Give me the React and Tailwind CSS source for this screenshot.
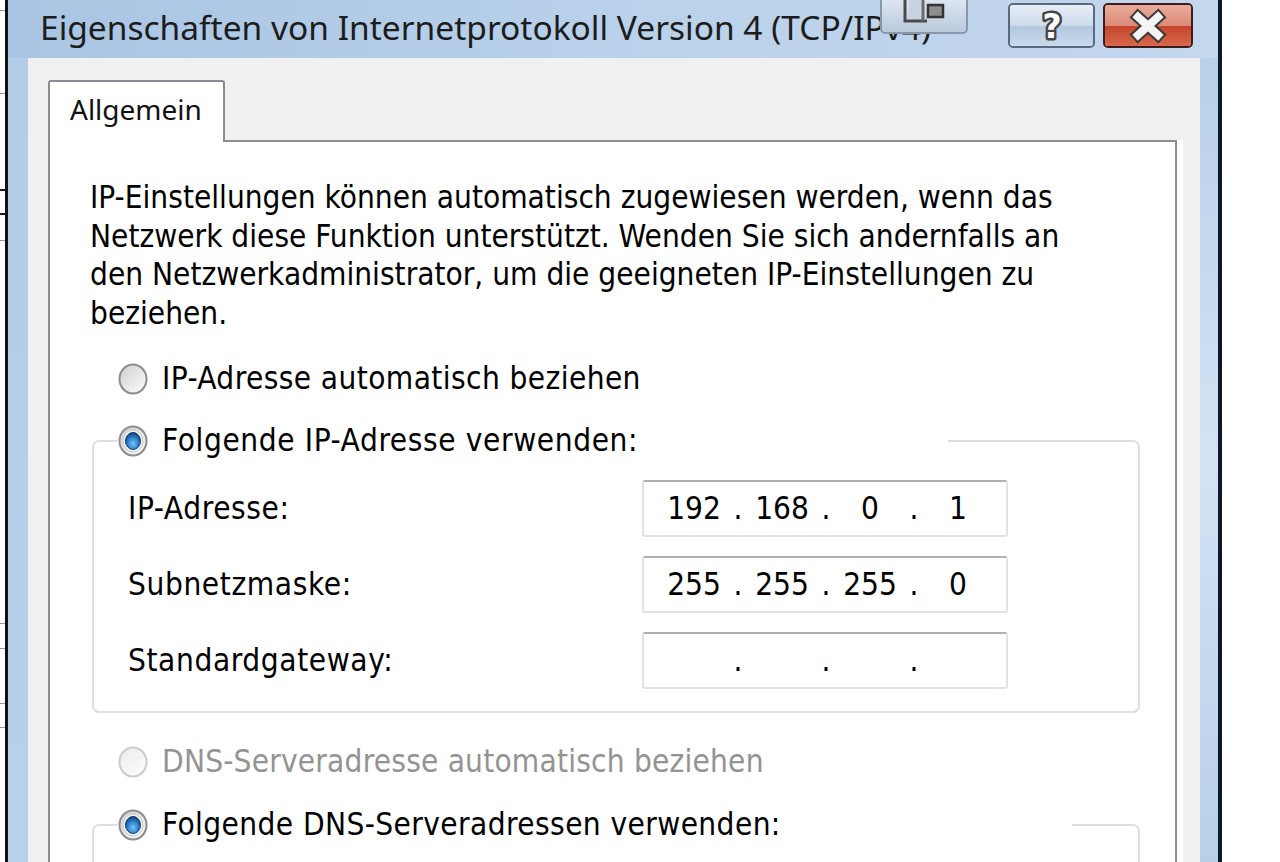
import React from "react";

const dlgFont = "font-['DejaVu_Sans_Condensed','DejaVu_Sans',sans-serif] [font-stretch:condensed]";
const uiFont = "font-['Noto_Sans','Open_Sans',sans-serif]";

function Radio({ checked = false, disabled = false }) {
  const v = disabled ? "d" : checked ? "c" : "u";
  return (
    <svg width="30" height="32" viewBox="0 0 30 32" className="shrink-0">
      <defs>
        <linearGradient id={`fill-${v}`} x1="0" y1="0" x2="1" y2="1">
          <stop offset="0" stopColor={disabled ? "#ececec" : "#cfcfcf"} />
          <stop offset="1" stopColor="#fdfdfd" />
        </linearGradient>
        <radialGradient id={`dot-${v}`} cx="0.5" cy="0.65" r="0.6">
          <stop offset="0" stopColor="#7cc4f6" />
          <stop offset="0.55" stopColor="#2f86cf" />
          <stop offset="1" stopColor="#104a86" />
        </radialGradient>
      </defs>
      <ellipse
        cx="15"
        cy="16"
        rx="13.5"
        ry="14.5"
        fill={`url(#fill-${v})`}
        stroke={disabled ? "#cbcbcb" : "#8c8c8c"}
        strokeWidth="2"
      />
      {checked && (
        <>
          <ellipse cx="15" cy="16" rx="10" ry="11" fill="#f4f4f4" stroke="#c6c6c6" strokeWidth="1" />
          <ellipse cx="15" cy="16" rx="7.5" ry="8.5" fill={`url(#dot-${v})`} stroke="#0e3f73" strokeWidth="1" />
        </>
      )}
    </svg>
  );
}

function IpBox({ parts }) {
  return (
    <div className="w-[366px] h-[57px] shrink-0 bg-white border-2 border-[#dfe3e9] border-t-[#aeb0b6] rounded-[3px] flex items-center pl-[12px]">
      {parts.map((p, i) => (
        <React.Fragment key={i}>
          <span className="w-[76px] text-center">{p}</span>
          {i < 3 && <span className="w-[12px] text-center">.</span>}
        </React.Fragment>
      ))}
    </div>
  );
}

function Row({ label, parts }) {
  return (
    <div className="flex items-center h-[57px]">
      <span className="flex-1 tracking-[0.6px]">{label}</span>
      <IpBox parts={parts} />
    </div>
  );
}

export default function App() {
  return (
    <div className="w-[1280px] h-[862px] overflow-hidden bg-white flex text-black">
      {/* background window edge */}
      <div className="w-[5px] h-full bg-white flex flex-col">
        <div className="h-[10px]" />
        <div className="h-[1px] bg-[#9a9a9a]" />
        <div className="h-[82px]" />
        <div className="h-[1px] bg-[#9a9a9a]" />
        <div className="h-[95px]" />
        <div className="h-[2px] bg-[#1a1a1a]" />
        <div className="h-[22px]" />
        <div className="h-[2px] bg-[#1a1a1a]" />
        <div className="h-[25px]" />
        <div className="h-[1px] bg-[#9a9a9a]" />
        <div className="h-[382px]" />
        <div className="h-[1px] bg-[#9a9a9a]" />
        <div className="h-[24px]" />
        <div className="h-[1px] bg-[#9a9a9a]" />
        <div className="h-[54px]" />
        <div className="h-[1px] bg-[#9a9a9a]" />
        <div className="h-[23px]" />
        <div className="h-[1px] bg-[#9a9a9a]" />
      </div>
      <div className="w-[3px] h-full bg-[#111111]" />

      {/* dialog window */}
      <div className="w-[1210px] h-full flex flex-col bg-[#b8d0ea] relative">
        {/* title bar */}
        <div className="h-[58px] shrink-0 bg-gradient-to-r from-[#a9c5e3] via-[#b9d1ea] to-[#c3d7ed] flex items-center pl-[32px] pb-[2px]">
          <span className={`${uiFont} text-[33.5px] leading-none text-[#1c1c1c] whitespace-nowrap`}>
            Eigenschaften von Internetprotokoll Version 4 (TCP/IPv4)
          </span>
        </div>

        {/* overlay button */}
        <div className="absolute left-[872px] top-[-3px] w-[88px] h-[37px] rounded-b-[5px] border-2 border-[#8898ab] bg-gradient-to-b from-[#dde7f2] to-[#b9c9dc] flex items-start justify-center">
          <svg width="46" height="28" viewBox="0 0 46 28">
            <path d="M4 0 V22 H26" fill="none" stroke="#4a4a4a" strokeWidth="3" />
            <path d="M22 0 V22" fill="none" stroke="#6a6a6a" strokeWidth="3" />
            <rect x="8" y="0" width="12" height="20" fill="#c9d3df" />
            <rect x="27" y="6" width="15" height="12" fill="#8e8e8e" stroke="#333333" strokeWidth="2.5" />
          </svg>
        </div>

        {/* help button */}
        <div className="absolute left-[1000px] top-[3px] w-[87px] h-[45px] rounded-[5px] border-2 border-[#5a6a7e] overflow-hidden flex flex-col">
          <div className="h-1/2 bg-gradient-to-b from-[#e6eef7] to-[#cddbeb]" />
          <div className="h-1/2 bg-gradient-to-b from-[#b2c7de] to-[#c9daed]" />
          <div className="absolute inset-0 flex items-center justify-center">
            <svg width="40" height="41" viewBox="0 0 40 41">
              <text
                x="20"
                y="33"
                textAnchor="middle"
                fontFamily="DejaVu Sans, Liberation Sans, sans-serif"
                fontWeight="700"
                fontSize="33"
                fill="#ffffff"
                stroke="#454545"
                strokeWidth="5"
                strokeLinejoin="round"
                paintOrder="stroke"
              >
                ?
              </text>
            </svg>
          </div>
        </div>

        {/* close button */}
        <div className="absolute left-[1095px] top-[3px] w-[90px] h-[45px] rounded-[5px] border-2 border-[#3e1c1c] overflow-hidden flex flex-col">
          <div className="h-1/2 bg-gradient-to-b from-[#eaab9b] to-[#db8a76]" />
          <div className="h-1/2 bg-gradient-to-b from-[#c4432a] to-[#d8694e]" />
          <svg className="absolute inset-0" width="86" height="41" viewBox="0 0 86 41">
            <path d="M33 12 L53 30 M53 12 L33 30" stroke="#3a3a3a" strokeWidth="12" strokeLinecap="square" />
            <path d="M33 12 L53 30 M53 12 L33 30" stroke="#f4f4f4" strokeWidth="8" strokeLinecap="square" />
          </svg>
        </div>

        {/* frame + body */}
        <div className="flex-1 flex min-h-0">
          <div className="w-[20px] bg-gradient-to-b from-[#b3cce8] to-[#b8d0ea]" />
          <div className="w-[1172px] bg-[#f0f0f0] flex flex-col pt-[22px]">
            {/* tab */}
            <div
              className={`${uiFont} ml-[20px] w-[177px] h-[62px] -mb-[2px] relative z-10 bg-white border-2 border-b-0 border-[#898c95] rounded-t-[3px] flex items-center pl-[20px] pb-[6px] text-[28px] text-[#111111]`}
            >
              Allgemein
            </div>
            <div className="flex ml-[20px] flex-1 min-h-0">
              {/* panel */}
              <div className={`${dlgFont} w-[1129px] border-2 border-b-0 border-[#898c95] bg-white text-[31.3px] leading-[38.7px] pt-[36px]`}>
                <p className="ml-[40px] whitespace-nowrap">
                  IP-Einstellungen können automatisch zugewiesen werden, wenn das
                  <br />
                  Netzwerk diese Funktion unterstützt. Wenden Sie sich andernfalls an
                  <br />
                  den Netzwerkadministrator, um die geeigneten IP-Einstellungen zu
                  <br />
                  beziehen.
                </p>

                <div className="ml-[68px] mt-[26px] h-[40px] flex items-center gap-[14px]">
                  <Radio />
                  <span className="tracking-[0.4px]">IP-Adresse automatisch beziehen</span>
                </div>

                <fieldset className="ml-[42px] mt-[22px] w-[1048px] border-2 border-[#dadfe4] rounded-[7px]">
                  <legend className="ml-[23px] w-[831px] h-[40px] pl-[1px] flex items-center gap-[14px]">
                    <Radio checked />
                    <span className="tracking-[0.6px]">Folgende IP-Adresse verwenden:</span>
                  </legend>
                  <div className="pl-[34px] pr-[130px] pt-[19px] pb-[22px] flex flex-col gap-[19px]">
                    <Row label="IP-Adresse:" parts={["192", "168", "0", "1"]} />
                    <Row label="Subnetzmaske:" parts={["255", "255", "255", "0"]} />
                    <Row label="Standardgateway:" parts={["", "", "", ""]} />
                  </div>
                </fieldset>

                <div className="ml-[68px] mt-[29px] h-[40px] flex items-center gap-[14px] text-[#939393]">
                  <Radio disabled />
                  <span className="tracking-[0.2px]">DNS-Serveradresse automatisch beziehen</span>
                </div>

                <fieldset className="ml-[42px] mt-[23px] w-[1048px] h-[200px] border-2 border-[#dadfe4] rounded-[7px]">
                  <legend className="ml-[23px] w-[955px] h-[40px] pl-[1px] flex items-center gap-[14px]">
                    <Radio checked />
                    <span className="tracking-[0.4px]">Folgende DNS-Serveradressen verwenden:</span>
                  </legend>
                </fieldset>
              </div>
              <div className="w-[6px] bg-white" />
            </div>
          </div>
          <div className="w-[18px] bg-gradient-to-b from-[#b8cfe9] via-[#d3e3f4] to-[#b8cfe9]" />
        </div>
      </div>
      <div className="w-[4px] h-full bg-[#0c1826]" />
      <div className="flex-1 bg-white" />
    </div>
  );
}
